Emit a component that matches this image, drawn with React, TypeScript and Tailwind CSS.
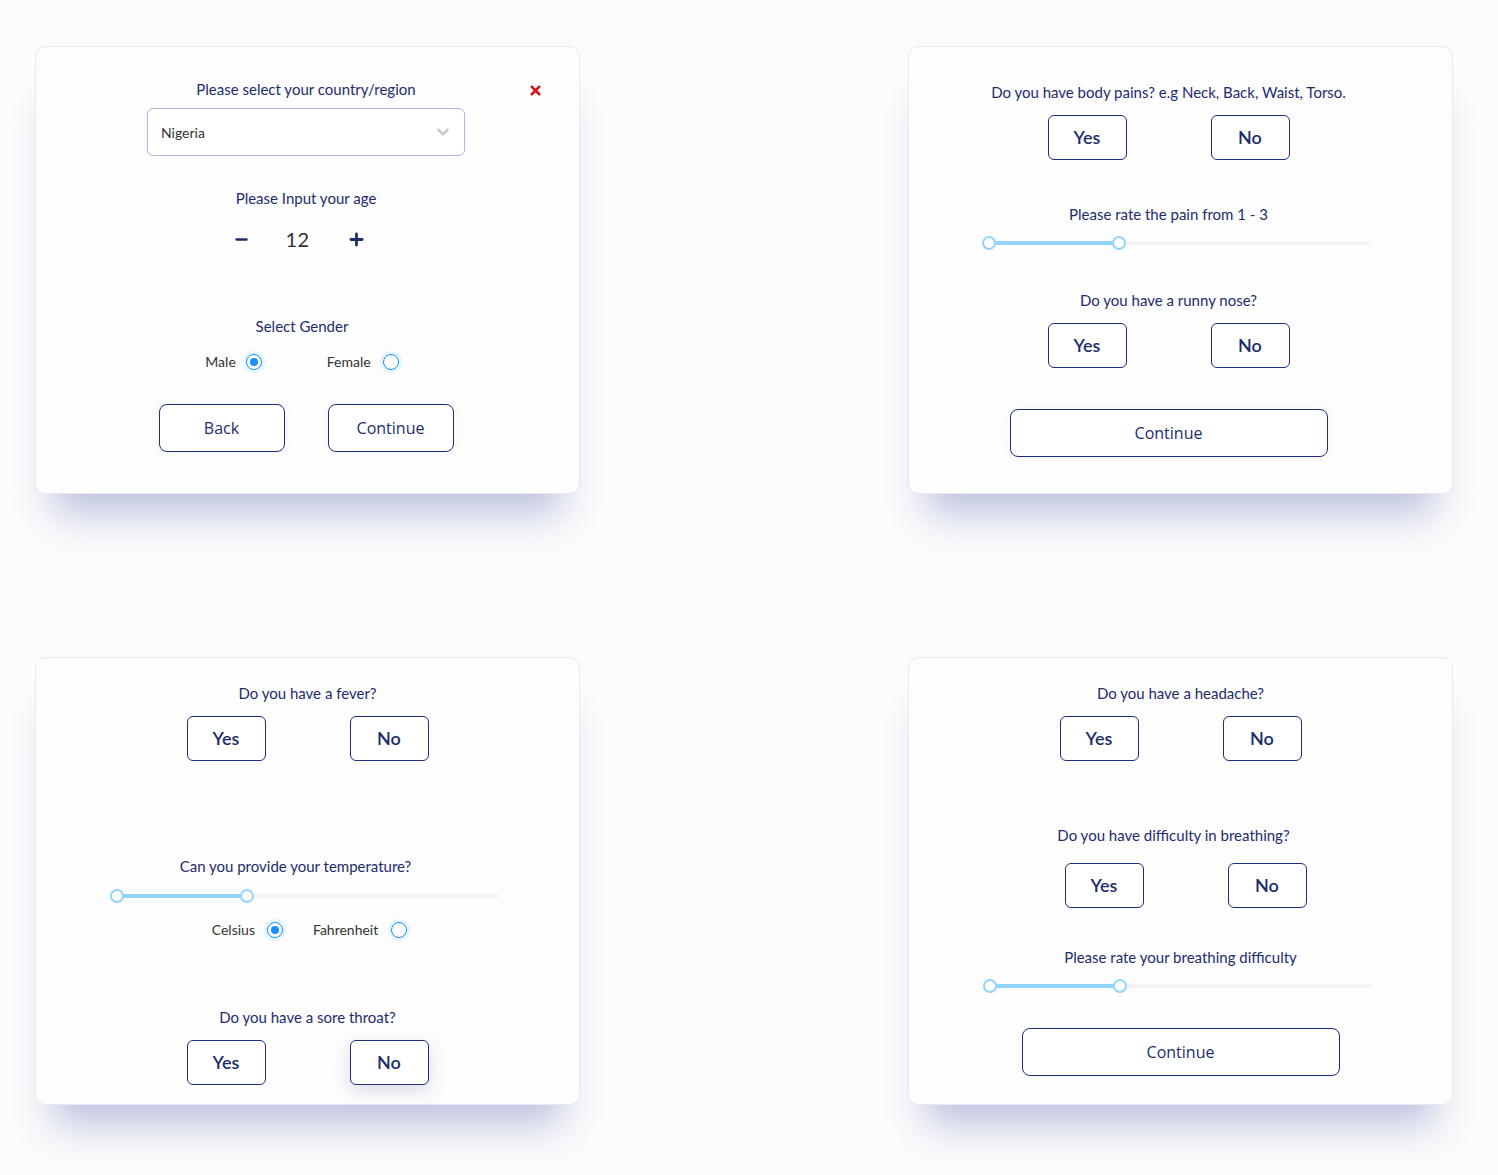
import React from 'react';
import { X, Minus, Plus, ChevronDown } from 'lucide-react';

const label = "text-[15px] leading-5 text-[#1d2c6b] text-center";

const Card: React.FC<{ children: React.ReactNode; className?: string }> = ({ children, className = '' }) => (
  <div
    className={`relative h-[448px] rounded-[10px] border border-[#e8e9f2] bg-[#fdfdfe] shadow-[0_38px_38px_-18px_rgba(40,60,150,0.3)] flex flex-col items-center ${className}`}
  >
    {children}
  </div>
);

const Choice: React.FC<{ text: string; hover?: boolean }> = ({ text, hover }) => (
  <button
    className={`w-[79px] h-[45px] rounded-[6px] border border-[#1c2f78] bg-white text-[18px] font-semibold text-[#1d2c6b] ${
      hover ? 'shadow-[0_6px_18px_rgba(30,50,130,0.16)]' : ''
    }`}
  >
    {text}
  </button>
);

const YesNo: React.FC<{ className?: string; hoverNo?: boolean }> = ({ className = '', hoverNo }) => (
  <div className={`flex gap-[84px] ${className}`}>
    <Choice text="Yes" />
    <Choice text="No" hover={hoverNo} />
  </div>
);

const Outline: React.FC<{ text: string; w: string; className?: string }> = ({ text, w, className = '' }) => (
  <button
    className={`${w} h-[48px] rounded-[8px] border border-[#1c2f78] bg-white text-[16px] text-[#1d2c6b] shadow-[0_0_10px_rgba(0,0,0,0.04)] ${className}`}
    style={{ fontFamily: '"Open Sans", "Noto Sans", sans-serif' }}
  >
    {text}
  </button>
);

const Slider: React.FC<{ className?: string }> = ({ className = '' }) => (
  <div className={`relative w-[382px] h-[14px] ${className}`}>
    <div className="absolute left-0 right-0 top-[5px] h-[4px] rounded-full bg-[#f3f3f5]" />
    <div className="absolute left-0 w-[130px] top-[5px] h-[4px] rounded-full bg-[#91d5ff]" />
    <div className="absolute left-[-7px] top-0 w-[14px] h-[14px] rounded-full border-2 border-[#91d5ff] bg-white" />
    <div className="absolute left-[123px] top-0 w-[14px] h-[14px] rounded-full border-2 border-[#91d5ff] bg-white" />
  </div>
);

const Radio: React.FC<{ checked?: boolean }> = ({ checked }) => (
  <span className="flex items-center justify-center w-[16px] h-[16px] rounded-full border border-[#1890ff] bg-white shadow-[0_0_0_3px_#e6f4ff]">
    {checked && <span className="w-[8px] h-[8px] rounded-full bg-[#1890ff]" />}
  </span>
);

const RadioItem: React.FC<{ text: string; checked?: boolean; gap?: string }> = ({ text, checked, gap = 'gap-[10px]' }) => (
  <label className={`flex items-center ${gap} text-[14px] leading-5 text-[#333]`}>
    {text}
    <Radio checked={checked} />
  </label>
);

export default function App() {
  return (
    <div
      className="min-h-screen bg-[#fcfcfd] pl-[35px] pt-[46px] pb-[70px]"
      style={{ fontFamily: 'Lato, "Noto Sans", sans-serif' }}
    >
      <div className="grid grid-cols-[545px_545px] gap-x-[328px] gap-y-[163px]">
        {/* country / age / gender */}
        <Card className="pt-[32px] pr-[3px]">
          <button className="absolute right-[36px] top-[36px] text-[#d4141c]">
            <X size={15} strokeWidth={4} />
          </button>
          <p className={label}>Please select your country/region</p>
          <div className="mt-[9px] w-[318px] h-[48px] rounded-[6px] border border-[#a9b8e0] bg-white flex items-center justify-between pl-[13px] pr-[12px]">
            <span className="text-[14px] text-[#333]">Nigeria</span>
            <ChevronDown size={18} strokeWidth={3.5} className="text-[#c9c9cc]" />
          </div>
          <p className={`${label} mt-[32px]`}>Please Input your age</p>
          <div className="mt-[17px] h-[28px] flex items-center mr-[14px]">
            <Minus size={17} strokeWidth={3.5} className="text-[#1d2c6b] mr-[30px]" />
            <span className="text-[20px] text-[#333] w-[36px] text-center tracking-wide">12</span>
            <Plus size={19} strokeWidth={3.5} className="text-[#1d2c6b] ml-[31px]" />
          </div>
          <p className={`${label} mt-[63px] mr-[8px]`}>Select Gender</p>
          <div className="mt-[16px] flex gap-[65px] mr-[8px]">
            <RadioItem text="Male" checked />
            <RadioItem text="Female" gap="gap-[12px]" />
          </div>
          <div className="mt-[32px] flex gap-[43px]">
            <Outline text="Back" w="w-[126px]" />
            <Outline text="Continue" w="w-[126px]" />
          </div>
        </Card>

        {/* body pains */}
        <Card className="pt-[35px] pr-[24px]">
          <p className={`${label} text-[15.2px]`}>Do you have body pains? e.g Neck, Back, Waist, Torso.</p>
          <YesNo className="mt-[13px]" />
          <p className={`${label} mt-[44px]`}>Please rate the pain from 1 - 3</p>
          <Slider className="mt-[12px] ml-[22px]" />
          <p className={`${label} mt-[40px]`}>Do you have a runny nose?</p>
          <YesNo className="mt-[13px]" />
          <Outline text="Continue" w="w-[318px]" className="mt-[41px]" />
        </Card>

        {/* fever / temperature / throat */}
        <Card className="pt-[25px]">
          <p className={label}>Do you have a fever?</p>
          <YesNo className="mt-[13px]" />
          <p className={`${label} mt-[95px] mr-[24px]`}>Can you provide your temperature?</p>
          <Slider className="mt-[13px]" />
          <div className="mt-[17px] flex gap-[30px] ml-[4px]">
            <RadioItem text="Celsius" checked gap="gap-[12px]" />
            <RadioItem text="Fahrenheit" gap="gap-[13px]" />
          </div>
          <p className={`${label} mt-[67px]`}>Do you have a sore throat?</p>
          <YesNo className="mt-[13px]" hoverNo />
        </Card>

        {/* headache / breathing */}
        <Card className="pt-[25px]">
          <p className={label}>Do you have a headache?</p>
          <YesNo className="mt-[13px]" />
          <p className={`${label} mt-[64px] mr-[14px]`}>Do you have difficulty in breathing?</p>
          <YesNo className="mt-[18px] ml-[10px]" />
          <p className={`${label} mt-[39px]`}>Please rate your breathing difficulty</p>
          <Slider className="mt-[12px] ml-[1px]" />
          <Outline text="Continue" w="w-[318px]" className="mt-[35px]" />
        </Card>
      </div>
    </div>
  );
}
